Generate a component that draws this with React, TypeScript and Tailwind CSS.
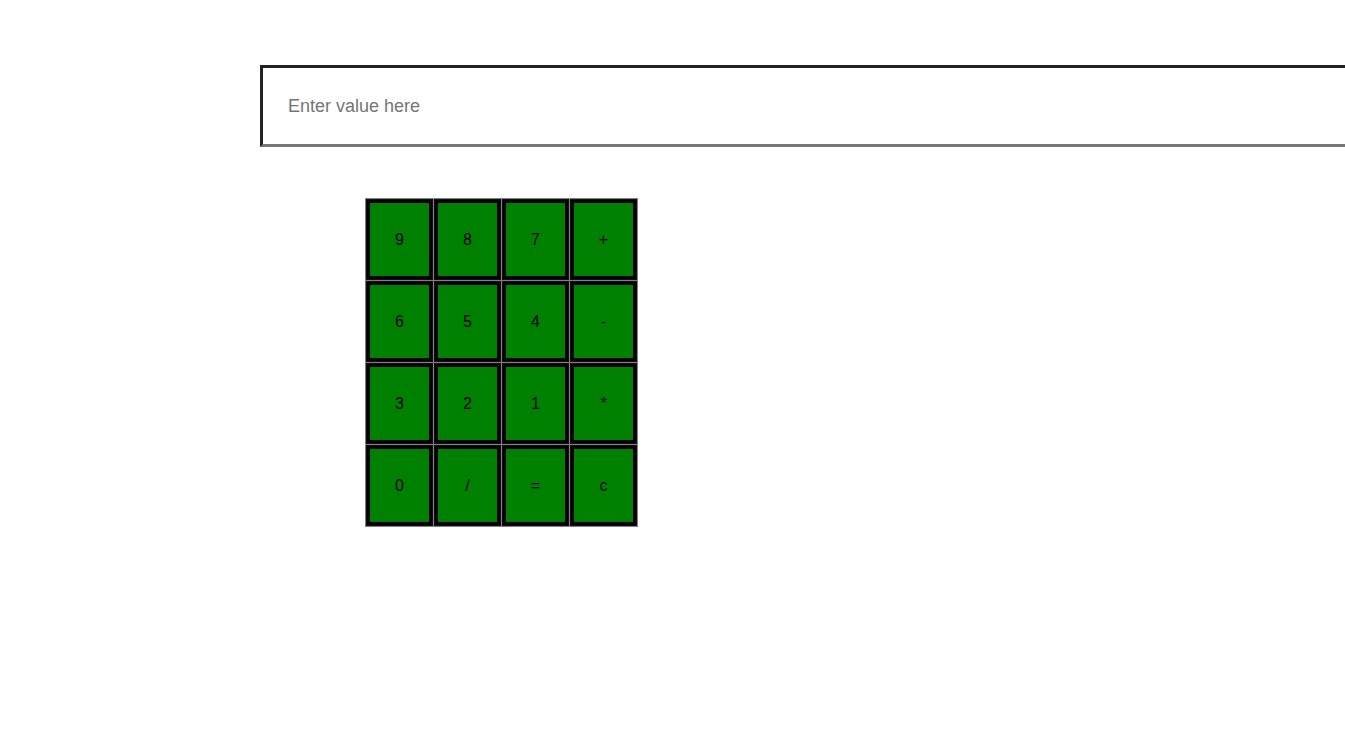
const rows = [
  ["9", "8", "7", "+"],
  ["6", "5", "4", "-"],
  ["3", "2", "1", "*"],
  ["0", "/", "=", "c"]
];

export default function App() {
  return (
    <div className="h-screen w-full overflow-hidden bg-white font-['Liberation_Sans',Arial,sans-serif]">
      <div className="pt-[65px] pl-[260px]">
        <input
          type="text"
          placeholder="Enter value here"
          className="block h-[82px] w-[1200px] border-[3px] border-t-[#222] border-l-[#222] border-b-[#777] border-r-[#777] bg-white pl-[25px] text-[18px] text-black outline-none placeholder:text-[#757575]"
        />
      </div>

      <table className="mt-[51px] ml-[365px] border-collapse border border-[#808080]">
        <tbody>
          {rows.map((row, i) => (
            <tr key={i}>
              {row.map((key) => (
                <td key={key} className="border border-[#808080] bg-[#111] p-px">
                  <button className="flex h-[79px] w-[65px] items-center justify-center border-[3px] border-black bg-[#008000] text-[16px] text-black">
                    {key}
                  </button>
                </td>
              ))}
            </tr>
          ))}
        </tbody>
      </table>
    </div>
  );
}
